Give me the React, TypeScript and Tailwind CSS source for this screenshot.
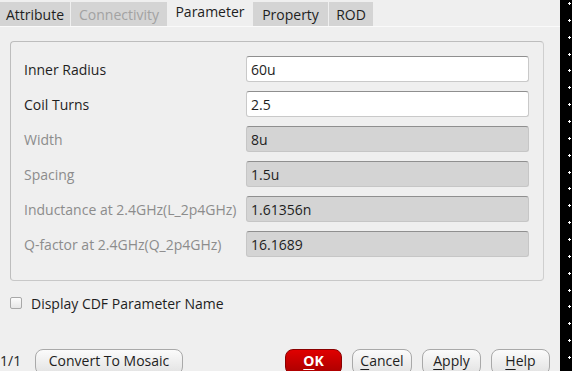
import React from 'react';

const tabs = [
  { label: 'Attribute', w: 'w-[70px]', state: 'normal' },
  { label: 'Connectivity', w: 'w-[96px]', state: 'disabled' },
  { label: 'Parameter', w: 'w-[84px]', state: 'active' },
  { label: 'Property', w: 'w-[75px]', state: 'normal' },
  { label: 'ROD', w: 'w-[44px]', state: 'normal' },
];

const params = [
  { label: 'Inner Radius', value: '60u', editable: true },
  { label: 'Coil Turns', value: '2.5', editable: true },
  { label: 'Width', value: '8u', editable: false },
  { label: 'Spacing', value: '1.5u', editable: false },
  { label: 'Inductance at 2.4GHz(L_2p4GHz)', value: '1.61356n', editable: false },
  { label: 'Q-factor at 2.4GHz(Q_2p4GHz)', value: '16.1689', editable: false },
];

const Btn = ({ k, rest, w }: { k: string; rest: string; w: string }) => (
  <button
    className={`${w} h-[26px] rounded-[8px] border border-[#a9a9a9] bg-gradient-to-b from-[#fbfbfb] to-[#e2e2e2] text-[14px] text-[#1e1e1e] flex items-start justify-center pt-0`}
  >
    <span>
      <span className="underline underline-offset-[3px]">{k}</span>
      {rest}
    </span>
  </button>
);

const App = () => {
  return (
    <div className="w-[572px] h-[371px] flex overflow-hidden bg-[#efefef] font-['Open_Sans',sans-serif] text-[14px] text-[#1e1e1e]">
      <div className="w-[560px] flex flex-col">
        {/* tab bar */}
        <div className="h-[27px] shrink-0 flex items-end gap-[1px] border-b border-[#fafafa]">
          {tabs.map((t) => (
            <div
              key={t.label}
              className={`${t.w} flex justify-center ${
                t.state === 'active'
                  ? 'h-[27px] bg-[#efefef] pt-[2px]'
                  : 'h-[24px] bg-[#d4d4d4] pt-[2px]'
              } ${t.state === 'disabled' ? 'text-[#a2a2a2]' : 'text-[#1e1e1e]'}`}
            >
              {t.label}
            </div>
          ))}
        </div>

        {/* parameter group */}
        <div className="ml-[10px] mt-[14px] w-[534px] h-[240px] shrink-0 rounded-[4px] border border-[#bdbdbd] border-r-[#cfcfcf] border-b-[#c8c8c8] pl-[13px] pr-[14px] pt-[14px] flex flex-col gap-[9px]">
          {params.map((p) => (
            <div key={p.label} className="flex items-center h-[26px]">
              <div className={`w-[222px] ${p.editable ? 'text-[#1e1e1e]' : 'text-[#8c8c8c]'}`}>{p.label}</div>
              <div
                className={`w-[283px] h-[26px] rounded-[3px] border border-t-[#8f8f8f] pl-[4px] flex items-center ${
                  p.editable
                    ? 'bg-white border-[#c9c9c9]'
                    : 'bg-[#d4d4d4] border-[#c6c6c6]'
                }`}
              >
                {p.value}
              </div>
            </div>
          ))}
        </div>

        {/* checkbox */}
        <div className="mt-[14px] ml-[10px] flex items-center gap-[9px] h-[16px] shrink-0">
          <div className="w-[12px] h-[12px] rounded-[2px] border border-[#a8a8a8] bg-gradient-to-b from-[#fcfcfc] to-[#e6e6e6]" />
          <span>Display CDF Parameter Name</span>
        </div>

        {/* bottom buttons */}
        <div className="mt-[38px] flex items-start h-[26px] shrink-0">
          <span className="w-[35px] pt-[1px]">1/1</span>
          <Btn k="" rest="Convert To Mosaic" w="w-[148px]" />
          <div className="ml-[102px] flex gap-[10px]">
            <button className="w-[57px] h-[26px] rounded-[8px] border border-[#8a0000] bg-gradient-to-b from-[#e00000] to-[#a90000] text-white font-bold text-[14px] flex items-start justify-center pt-0">
              <span>
                <span className="underline underline-offset-[3px]">O</span>K
              </span>
            </button>
            <Btn k="C" rest="ancel" w="w-[60px]" />
            <Btn k="A" rest="pply" w="w-[59px]" />
            <Btn k="H" rest="elp" w="w-[59px]" />
          </div>
        </div>
      </div>

      {/* black dotted strip */}
      <div className="w-[12px] h-[371px] shrink-0 bg-black">
        <svg width="12" height="371" viewBox="0 0 12 371">
          {Array.from({ length: 23 }).map((_, i) => {
            const y = Math.round(3 + i * 16.86);
            return (
              <g key={i} fill="#ffffff">
                <rect x="8" y={y} width="3" height="1" />
                <rect x="9" y={y - 1} width="1" height="3" />
              </g>
            );
          })}
        </svg>
      </div>
    </div>
  );
};

export default App;
